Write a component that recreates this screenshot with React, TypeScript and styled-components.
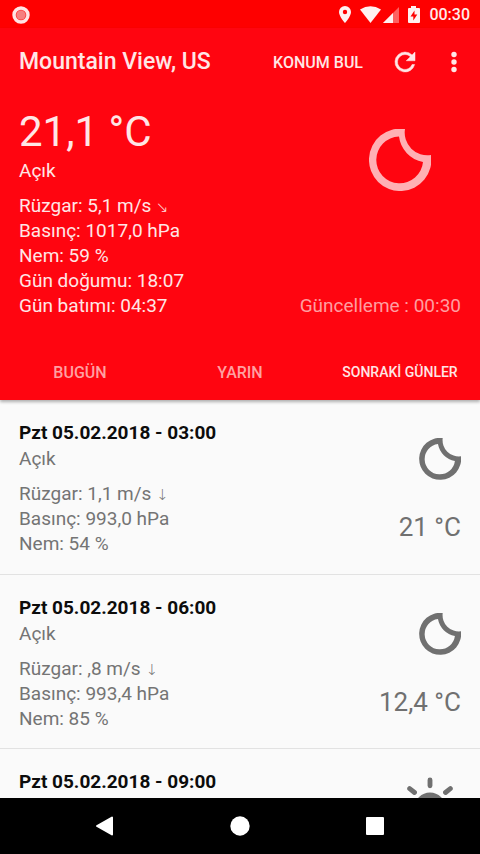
import React from "react";
import styled, { createGlobalStyle } from "styled-components";

const GlobalStyle = createGlobalStyle`
  * { box-sizing: border-box; }
  body {
    margin: 0;
    background: #fafafa;
    font-family: Roboto, "Noto Sans", sans-serif;
    font-size: 19px;
    line-height: 25px;
  }
  button { font: inherit; color: inherit; background: none; border: 0; padding: 0; cursor: pointer; }
  p, h1, h2, ul { margin: 0; padding: 0; }
  svg { display: block; }
`;

const Screen = styled.div`
  display: flex;
  flex-direction: column;
  height: 100vh;
  overflow: hidden;
`;

const StatusBar = styled.div`
  display: flex;
  align-items: center;
  height: 28px;
  padding: 1px 10px 0 12px;
  background: #fe0000;
  color: #ffe9e9;
  font-size: 16px;
  font-weight: 500;
  line-height: 24px;
`;

const StatusIcons = styled.div`
  display: flex;
  align-items: center;
  margin-left: auto;
`;

const Clock = styled.span`
  margin-left: 8px;
`;

const Header = styled.header`
  position: relative;
  flex: none;
  background: #ff0510;
  color: #ffe6e6;
  box-shadow: 0 2px 3px rgba(0, 0, 0, 0.3);
`;

const Toolbar = styled.div`
  display: flex;
  align-items: center;
  height: 68px;
  padding: 0 14px 0 19px;
`;

const City = styled.h1`
  flex: 1;
  font-size: 23px;
  font-weight: 500;
  line-height: 32px;
`;

const LocateButton = styled.button`
  font-size: 16px;
  font-weight: 500;
`;

const IconButton = styled.button<{ $gap: number }>`
  margin-left: ${(p) => p.$gap}px;
`;

const Current = styled.section`
  display: flex;
  justify-content: space-between;
  padding: 10px 19px 27px;
`;

const Temperature = styled.p`
  font-size: 42px;
  line-height: 52px;
`;

const Details = styled.div`
  padding-top: 10px;
`;

const Arrow = styled.span`
  font-family: "DejaVu Sans", sans-serif;
  font-size: 15px;
  font-weight: 200;
  line-height: 1;
`;

const CurrentSide = styled.div`
  display: flex;
  flex-direction: column;
  justify-content: space-between;
  align-items: flex-end;
  padding: 23px 0 0;
  color: #ff9ea0;
`;

const MoonSlot = styled.div`
  padding-right: 30px;
  color: #ffb0b4;
`;

const Tabs = styled.nav`
  display: grid;
  grid-template-columns: repeat(3, 1fr);
  height: 55px;
`;

const Tab = styled.button<{ $active?: boolean; $compact?: boolean }>`
  color: ${(p) => (p.$active ? "#ffe6e6" : "#ffa0a2")};
  font-size: ${(p) => (p.$compact ? 14 : 16)}px;
  font-weight: 500;
`;

const Forecasts = styled.ul`
  flex: 1;
  min-height: 0;
  overflow: hidden;
  list-style: none;
  background: #fafafa;
`;

const ForecastRow = styled.li`
  display: flex;
  justify-content: space-between;
  height: 174px;
  padding: 20px 19px 0;
  color: #747474;

  & + & {
    border-top: 1px solid #e2e2e2;
  }
`;

const Moment = styled.h2`
  color: #0c0c0c;
  font-size: 19px;
  font-weight: 700;
  line-height: 26px;
`;

const RowSide = styled.div`
  display: flex;
  flex-direction: column;
  align-items: flex-end;
  gap: 19px;
  padding-top: 7px;
  color: #707070;
  font-size: 26px;
  line-height: 34px;
`;

const WeatherSlot = styled.div`
  display: flex;
  align-items: center;
  height: 64px;
`;

const SystemNav = styled.nav`
  display: flex;
  flex: none;
  justify-content: center;
  gap: 107px;
  align-items: center;
  height: 56px;
  background: #000;
  color: #fff;
`;

const Moon = ({ size, bold }: { size: number; bold?: boolean }) => (
  <svg width={size} height={size} viewBox="0 0 62 62" fill="currentColor" aria-hidden="true">
    <path
      fillRule="evenodd"
      d={
        bold
          ? "M35 0A31 31 0 1 0 62 27A24 24 0 0 1 35 0ZM28 9A31 31 0 0 0 53 34A22.4 22.4 0 1 1 28 9Z"
          : "M36 0A31.2 31.2 0 1 0 62 26A22.6 22.6 0 0 1 36 0ZM30 7.5A29.6 29.6 0 0 0 54 33A23.4 23.4 0 1 1 30 7.5Z"
      }
    />
  </svg>
);

const Sun = () => (
  <svg width="62" height="62" viewBox="0 0 64 64" fill="none" stroke="currentColor" strokeWidth="5" strokeLinecap="round" aria-hidden="true">
    <circle cx="32" cy="32" r="13" strokeWidth="6" />
    <path d="M32 3v6M32 55v6M3 32h6M55 32h6M11 12l5 4M48 48l5 4M53 12l-5 4M16 48l-5 4" />
  </svg>
);

const RecordDot = () => (
  <svg width="18" height="18" viewBox="0 0 18 18" aria-hidden="true">
    <circle cx="9" cy="9" r="7" fill="#ff3a3a" stroke="#ffe4e4" strokeWidth="3.4" />
    <circle cx="9" cy="9" r="4.5" fill="#f58080" />
  </svg>
);

const StatusGlyphs = () => (
  <svg width="84" height="20" viewBox="0 0 84 20" fill="#fff0f0" aria-hidden="true">
    <path fillRule="evenodd" d="M8 1A6 6 0 0 0 2 7C2 11.500 8 18 8 18S14 11.500 14 7A6 6 0 0 0 8 1ZM8 4.800A2.200 2.200 0 1 1 8 9.200A2.200 2.200 0 0 1 8 4.800Z" />
    <path d="M23 4.500Q33.500-2 44 4.500L33.500 18Z" />
    <path d="M46 18L62 2V18Z" opacity=".4" />
    <path d="M46 18L56 8V18Z" />
    <path fillRule="evenodd" d="M74 1h5v2h3q1 0 1 1v13q0 1-1 1h-10q-1 0-1-1v-13q0-1 1-1h2ZM77.500 5.500L73.500 11.500H76.300V15.500L80.300 9.500H77.500Z" />
  </svg>
);

const Refresh = () => (
  <svg width="30" height="30" viewBox="0 0 24 24" fill="currentColor" stroke="currentColor" strokeWidth="0.4" aria-hidden="true">
    <path d="M17.650 6.350A7.960 7.960 0 0 0 12 4a8 8 0 1 0 7.730 10h-2.080A6 6 0 1 1 12 6c1.660 0 3.140.69 4.220 1.780L13 11h7V4z" />
  </svg>
);

const More = () => (
  <svg width="24" height="30" viewBox="0 0 24 30" fill="currentColor" aria-hidden="true">
    <circle cx="12" cy="7.500" r="2.700" />
    <circle cx="12" cy="15" r="2.700" />
    <circle cx="12" cy="22.500" r="2.700" />
  </svg>
);

type Forecast = {
  moment: string;
  wind: string;
  arrow: string;
  pressure: string;
  humidity: string;
  temperature: string;
  icon: "moon" | "sun";
};

const forecasts: Forecast[] = [
  { moment: "Pzt 05.02.2018 - 03:00", wind: "1,1", arrow: "↓", pressure: "993,0", humidity: "54", temperature: "21 °C", icon: "moon" },
  { moment: "Pzt 05.02.2018 - 06:00", wind: ",8", arrow: "↓", pressure: "993,4", humidity: "85", temperature: "12,4 °C", icon: "moon" },
  { moment: "Pzt 05.02.2018 - 09:00", wind: "", arrow: "", pressure: "", humidity: "", temperature: "", icon: "sun" },
];

export default function App() {
  return (
    <Screen>
      <GlobalStyle />
      <StatusBar>
        <RecordDot />
        <StatusIcons>
          <StatusGlyphs />
          <Clock>00:30</Clock>
        </StatusIcons>
      </StatusBar>
      <Header>
        <Toolbar>
          <City>Mountain View, US</City>
          <LocateButton>KONUM BUL</LocateButton>
          <IconButton $gap={27} aria-label="Yenile"><Refresh /></IconButton>
          <IconButton $gap={22} aria-label="Menü"><More /></IconButton>
        </Toolbar>
        <Current>
          <div>
            <Temperature>21,1 °C</Temperature>
            <p>Açık</p>
            <Details>
              <p>Rüzgar: 5,1 m/s <Arrow>↘</Arrow></p>
              <p>Basınç: 1017,0 hPa</p>
              <p>Nem: 59 %</p>
              <p>Gün doğumu: 18:07</p>
              <p>Gün batımı: 04:37</p>
            </Details>
          </div>
          <CurrentSide>
            <MoonSlot><Moon size={62} /></MoonSlot>
            <p>Güncelleme : 00:30</p>
          </CurrentSide>
        </Current>
        <Tabs>
          <Tab>BUGÜN</Tab>
          <Tab>YARIN</Tab>
          <Tab $active $compact>SONRAKİ GÜNLER</Tab>
        </Tabs>
      </Header>
      <Forecasts>
        {forecasts.map((f) => (
          <ForecastRow key={f.moment}>
            <div>
              <Moment>{f.moment}</Moment>
              {f.wind && (
                <>
                  <p>Açık</p>
                  <Details>
                    <p>Rüzgar: {f.wind} m/s <Arrow>{f.arrow}</Arrow></p>
                    <p>Basınç: {f.pressure} hPa</p>
                    <p>Nem: {f.humidity} %</p>
                  </Details>
                </>
              )}
            </div>
            <RowSide>
              <WeatherSlot>{f.icon === "moon" ? <Moon size={42} bold /> : <Sun />}</WeatherSlot>
              {f.temperature && <p>{f.temperature}</p>}
            </RowSide>
          </ForecastRow>
        ))}
      </Forecasts>
      <SystemNav>
        <button aria-label="Geri">
          <svg width="28" height="28" viewBox="0 0 28 28" fill="currentColor" stroke="currentColor" strokeWidth="2" strokeLinejoin="round">
            <path d="M6 14L21 5.500V22.500Z" />
          </svg>
        </button>
        <button aria-label="Ana ekran">
          <svg width="28" height="28" viewBox="0 0 28 28" fill="currentColor">
            <circle cx="14" cy="14" r="9.700" />
          </svg>
        </button>
        <button aria-label="Son uygulamalar">
          <svg width="28" height="28" viewBox="0 0 28 28" fill="currentColor">
            <rect x="5" y="5" width="18" height="18" rx="1" />
          </svg>
        </button>
      </SystemNav>
    </Screen>
  );
}
